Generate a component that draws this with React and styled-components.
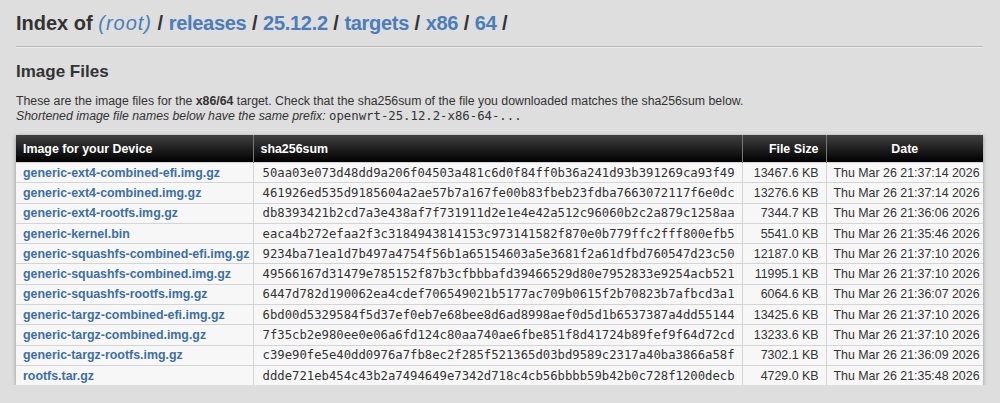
import React from 'react';
import styled, { createGlobalStyle } from 'styled-components';

const GlobalStyle = createGlobalStyle`
  html, body {
    margin: 0;
    background: #dedede;
  }
  body {
    font-family: "Liberation Sans", Arial, sans-serif;
    color: #333;
  }
`;

const Page = styled.div`
  padding: 0 17px 0 16px;
`;

const Title = styled.h1`
  font-size: 20px;
  font-weight: bold;
  margin: 0;
  padding: 12px 0 11px;
  line-height: 23px;
  color: #333;
  border-bottom: 1px solid #b8b8b8;
  box-shadow: 0 1px 0 #ececec;
`;

const Crumb = styled.a`
  color: #4a7dba;
  text-decoration: none;
  font-style: ${p => (p.$italic ? 'italic' : 'normal')};
  font-weight: ${p => (p.$italic ? 'normal' : 'bold')};
  letter-spacing: ${p => (p.$italic ? '1px' : '-0.3px')};
`;

const Heading = styled.h2`
  font-size: 17px;
  font-weight: bold;
  margin: 15px 0 0;
  line-height: 20px;
  color: #333;
`;

const Intro = styled.p`
  font-size: 12.3px;
  line-height: 15px;
  margin: 12px 0 0;
  color: #333;
`;

const Note = styled.span`
  font-style: italic;
`;

const Mono = styled.code`
  font-family: "DejaVu Sans Mono", monospace;
  font-style: normal;
  font-size: 12.3px;
`;

const Table = styled.table`
  width: 100%;
  margin-top: 11px;
  border-collapse: collapse;
  table-layout: fixed;
  background: #f7f7f7;
  box-shadow: 0 1px 4px rgba(0, 0, 0, 0.35);
  font-size: 12.4px;
`;

const Th = styled.th`
  height: 27px;
  padding: 0 7px;
  color: #fff;
  font-weight: bold;
  font-size: 12.4px;
  text-align: ${p => p.$align || 'left'};
  background: linear-gradient(#404040, #000);
  border-left: 1px solid #777;
  &:first-child {
    border-left: none;
  }
`;

const Td = styled.td`
  height: 19.3px;
  padding: 0 7px;
  text-align: ${p => p.$align || 'left'};
  border-top: 1px solid #d4d4d4;
  border-left: 1px solid #d4d4d4;
  white-space: nowrap;
  overflow: hidden;
  &:first-child {
    border-left: none;
  }
`;

const FileLink = styled.a`
  color: #3c6ea6;
  font-weight: bold;
  text-decoration: none;
`;

const Hash = styled.span`
  font-family: "DejaVu Sans Mono", monospace;
  font-size: 12.25px;
  color: #333;
  padding-left: 2px;
`;

const files = [
  ['generic-ext4-combined-efi.img.gz', '50aa03e073d48dd9a206f04503a481c6d0f84ff0b36a241d93b391269ca93f49', '13467.6 KB', 'Thu Mar 26 21:37:14 2026'],
  ['generic-ext4-combined.img.gz', '461926ed535d9185604a2ae57b7a167fe00b83fbeb23fdba7663072117f6e0dc', '13276.6 KB', 'Thu Mar 26 21:37:14 2026'],
  ['generic-ext4-rootfs.img.gz', 'db8393421b2cd7a3e438af7f731911d2e1e4e42a512c96060b2c2a879c1258aa', '7344.7 KB', 'Thu Mar 26 21:36:06 2026'],
  ['generic-kernel.bin', 'eaca4b272efaa2f3c3184943814153c973141582f870e0b779ffc2fff800efb5', '5541.0 KB', 'Thu Mar 26 21:35:46 2026'],
  ['generic-squashfs-combined-efi.img.gz', '9234ba71ea1d7b497a4754f56b1a65154603a5e3681f2a61dfbd760547d23c50', '12187.0 KB', 'Thu Mar 26 21:37:10 2026'],
  ['generic-squashfs-combined.img.gz', '49566167d31479e785152f87b3cfbbbafd39466529d80e7952833e9254acb521', '11995.1 KB', 'Thu Mar 26 21:37:10 2026'],
  ['generic-squashfs-rootfs.img.gz', '6447d782d190062ea4cdef706549021b5177ac709b0615f2b70823b7afbcd3a1', '6064.6 KB', 'Thu Mar 26 21:36:07 2026'],
  ['generic-targz-combined-efi.img.gz', '6bd00d5329584f5d37ef0eb7e68bee8d6ad8998aef0d5d1b6537387a4dd55144', '13425.6 KB', 'Thu Mar 26 21:37:10 2026'],
  ['generic-targz-combined.img.gz', '7f35cb2e980ee0e06a6fd124c80aa740ae6fbe851f8d41724b89fef9f64d72cd', '13233.6 KB', 'Thu Mar 26 21:37:10 2026'],
  ['generic-targz-rootfs.img.gz', 'c39e90fe5e40dd0976a7fb8ec2f285f521365d03bd9589c2317a40ba3866a58f', '7302.1 KB', 'Thu Mar 26 21:36:09 2026'],
  ['rootfs.tar.gz', 'ddde721eb454c43b2a7494649e7342d718c4cb56bbbb59b42b0c728f1200decb', '4729.0 KB', 'Thu Mar 26 21:35:48 2026'],
];

const App = () => {
  return (
    <Page>
      <GlobalStyle />
      <Title>
        Index of <Crumb $italic href="#">(root)</Crumb> / <Crumb href="#">releases</Crumb> /{' '}
        <Crumb href="#">25.12.2</Crumb> / <Crumb href="#">targets</Crumb> /{' '}
        <Crumb href="#">x86</Crumb> / <Crumb href="#">64</Crumb> /
      </Title>

      <Heading>Image Files</Heading>
      <Intro>
        These are the image files for the <b>x86/64</b> target. Check that the sha256sum of the file you
        downloaded matches the sha256sum below.
        <br />
        <Note>
          Shortened image file names below have the same prefix: <Mono>openwrt-25.12.2-x86-64-...</Mono>
        </Note>
      </Intro>

      <Table>
        <colgroup>
          <col style={{ width: 237 }} />
          <col style={{ width: 489 }} />
          <col style={{ width: 84 }} />
          <col style={{ width: 157 }} />
        </colgroup>
        <thead>
          <tr>
            <Th>Image for your Device</Th>
            <Th>sha256sum</Th>
            <Th $align="right">File Size</Th>
            <Th $align="center">Date</Th>
          </tr>
        </thead>
        <tbody>
          {files.map(([name, sum, size, date]) => (
            <tr key={name}>
              <Td><FileLink href="#">{name}</FileLink></Td>
              <Td><Hash>{sum}</Hash></Td>
              <Td $align="right">{size}</Td>
              <Td $align="center">{date}</Td>
            </tr>
          ))}
        </tbody>
      </Table>
    </Page>
  );
};

export default App;
